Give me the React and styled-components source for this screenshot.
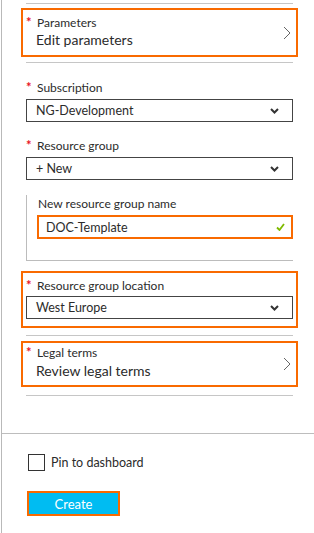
import React from 'react'
import styled, { createGlobalStyle } from 'styled-components'

const font = `"Segoe UI", Lato, "Open Sans", sans-serif`
const orange = '#f96a00'
const lineGray = '#c6c6c6'

const GlobalStyle = createGlobalStyle`
  html, body { margin: 0; padding: 0; background: #fff; }
  body { font-family: ${font}; color: #2b2b2b; }
  * { box-sizing: border-box; }
`

const Page = styled.div`
  width: 314px;
  height: 533px;
  margin-left: 1px;
  border-left: 1px solid #b9b9b9;
  display: flex;
  flex-direction: column;
  overflow: hidden;
`

const Form = styled.div`
  height: 433px;
  padding: 0 22px 0 24px;
  display: flex;
  flex-direction: column;
`

const Rule = styled.div`
  height: 1px;
  background: ${lineGray};
  margin-top: ${p => p.$top}px;
  flex-shrink: 0;
`

const Highlight = styled.div`
  margin: ${p => p.$top}px -5px 0;
  border: 2px solid ${orange};
  padding: ${p => p.$pad};
  position: relative;
`

const Label = styled.div`
  display: flex;
  align-items: flex-start;
  font-size: 12px;
  line-height: 15px;
  height: 18px;
  padding-top: ${p => p.$shift ?? 3}px;
  color: #2b2b2b;
  margin-top: ${p => p.$top || 0}px;
  margin-bottom: ${p => p.$bottom || 0}px;
  padding-left: ${p => (p.$plain ? 1 : 0)}px;
`

const Star = styled.span`
  width: 11px;
  color: #e81123;
  font-size: 13px;
  line-height: 15px;
  font-weight: bold;
`

const Value = styled.div`
  font-size: 14px;
  line-height: 20px;
  height: 20px;
  padding-left: 10px;
  color: #2b2b2b;
`

const Chevron = styled.svg`
  position: absolute;
  right: 5px;
  top: 50%;
  transform: translateY(-50%);
`

const Select = styled.div`
  height: 23px;
  border: 1px solid #444;
  display: flex;
  align-items: center;
  justify-content: space-between;
  padding: 0 13px 0 9px;
  font-size: 12.5px;
  color: #2b2b2b;
`

const SubSection = styled.div`
  margin-top: 15px;
  border-left: 1px solid #bcbcbc;
  border-bottom: 1px solid #bcbcbc;
  padding: 0 0 21px 10px;
`

const Input = styled.div`
  height: 24px;
  border: 2px solid ${orange};
  display: flex;
  align-items: center;
  justify-content: space-between;
  padding: 0 6px 0 7px;
  font-size: 12.5px;
  color: #2b2b2b;
`

const Footer = styled.div`
  border-top: 1px solid #bdbdbd;
  flex: 1;
  padding: 20px 0 0 26px;
`

const CheckRow = styled.label`
  display: flex;
  align-items: center;
  gap: 6px;
  font-size: 12.5px;
  color: #2b2b2b;
`

const Box = styled.span`
  width: 17px;
  height: 17px;
  border: 1px solid #333;
  display: inline-block;
`

const Button = styled.button`
  margin-top: 20px;
  margin-left: -1px;
  width: 93px;
  height: 25px;
  border: 2px solid ${orange};
  background: #00bcf2;
  color: #fff;
  font-family: ${font};
  font-size: 13px;
  padding: 0;
  display: flex;
  align-items: center;
  justify-content: center;
`

const RightChevron = () => (
  <Chevron width="8" height="14" viewBox="0 0 8 14">
    <path d="M1 1 L7 7 L1 13" fill="none" stroke="#666" strokeWidth="1" />
  </Chevron>
)

const DownChevron = () => (
  <svg width="9" height="6" viewBox="0 0 9 6">
    <path d="M1 1 L4.5 4.5 L8 1" fill="none" stroke="#333" strokeWidth="2" />
  </svg>
)

const Check = () => (
  <svg width="9" height="8" viewBox="0 0 9 8">
    <path d="M1 4.5 L3.5 7 L8 1" fill="none" stroke="#7fba00" strokeWidth="1.8" />
  </svg>
)

const Req = ({ children, ...rest }) => (
  <Label {...rest}>
    <Star>*</Star>
    {children}
  </Label>
)

export default function App() {
  return (
    <>
      <GlobalStyle />
      <Page>
        <Form>
          <Rule $top={3} />
          <Highlight $top={4} $pad="2px 3px 5px">
            <Req>Parameters</Req>
            <Value>Edit parameters</Value>
            <RightChevron />
          </Highlight>
          <Rule $top={5} />

          <Req $top={14} $bottom={4}>Subscription</Req>
          <Select>
            NG-Development
            <DownChevron />
          </Select>

          <Req $top={13} $bottom={4}>Resource group</Req>
          <Select>
            + New
            <DownChevron />
          </Select>

          <SubSection>
            <Label $plain $shift={1} $bottom={2}>New resource group name</Label>
            <Input>
              DOC-Template
              <Check />
            </Input>
          </SubSection>

          <Highlight $top={10} $pad="2px 3px 7px">
            <Req $bottom={3}>Resource group location</Req>
            <Select>
              West Europe
              <DownChevron />
            </Select>
          </Highlight>
          <Rule $top={7} />

          <Highlight $top={5} $pad="0 3px 4px">
            <Req $shift={2}>Legal terms</Req>
            <Value>Review legal terms</Value>
            <RightChevron />
          </Highlight>
          <Rule $top={8} />
        </Form>
        <Footer>
          <CheckRow>
            <Box />
            Pin to dashboard
          </CheckRow>
          <Button>Create</Button>
        </Footer>
      </Page>
    </>
  )
}
